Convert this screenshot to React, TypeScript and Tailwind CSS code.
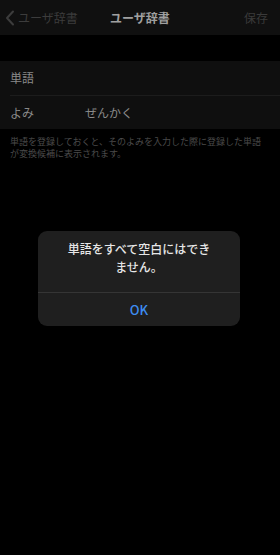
import React from 'react';

const font = { fontFamily: '"Noto Sans CJK JP", "Noto Sans", sans-serif' };

export default function App() {
  return (
    <div className="relative w-[280px] h-[555px] bg-black overflow-hidden" style={font}>
      {/* nav bar */}
      <div className="h-[35px] bg-[#101010] flex items-center relative">
        <div className="flex items-center pl-[5px] text-[12px] text-[#3c3c3c]">
          <svg width="10" height="16" viewBox="0 0 10 16" className="mr-[3px]">
            <path d="M8 1.5 L2 8 L8 14.5" fill="none" stroke="#3c3c3c" strokeWidth="2" strokeLinecap="round" strokeLinejoin="round" />
          </svg>
          <span>ユーザ辞書</span>
        </div>
        <div className="absolute left-0 right-0 text-center text-[12px] font-bold text-[#a0a0a0] pointer-events-none">
          ユーザ辞書
        </div>
        <div className="ml-auto pr-[12px] text-[12px] text-[#3a3a3a]">保存</div>
      </div>

      {/* form */}
      <div className="mt-[26px] bg-[#0f0f0f]">
        <div className="h-[34px] flex items-center pl-[10px] text-[12px] text-[#8a8a8a]">単語</div>
        <div className="ml-[10px] h-px bg-[#1c1c1c]" />
        <div className="h-[33px] flex items-center pl-[10px] text-[12px] text-[#8a8a8a]">
          <span className="w-[75px]">よみ</span>
          <span>ぜんかく</span>
        </div>
      </div>
      <p className="px-[10px] pr-[12px] pt-[7px] text-[9px] leading-[12px] text-[#4a4a4a]">
        単語を登録しておくと、そのよみを入力した際に登録した単語が変換候補に表示されます。
      </p>

      {/* alert */}
      <div className="absolute left-[38px] top-[231px] w-[202px] rounded-[9px] bg-[#1f1f1f] overflow-hidden">
        <div className="h-[61px] px-[26px] pt-[9px] text-center text-[12px] leading-[18px] font-medium text-[#e6e6e6]">
          単語をすべて空白にはできません。
        </div>
        <div className="h-px bg-[#353535]" />
        <div className="h-[33px] flex items-center justify-center text-[13px] font-medium text-[#3d8cf0]">OK</div>
      </div>
    </div>
  );
}
